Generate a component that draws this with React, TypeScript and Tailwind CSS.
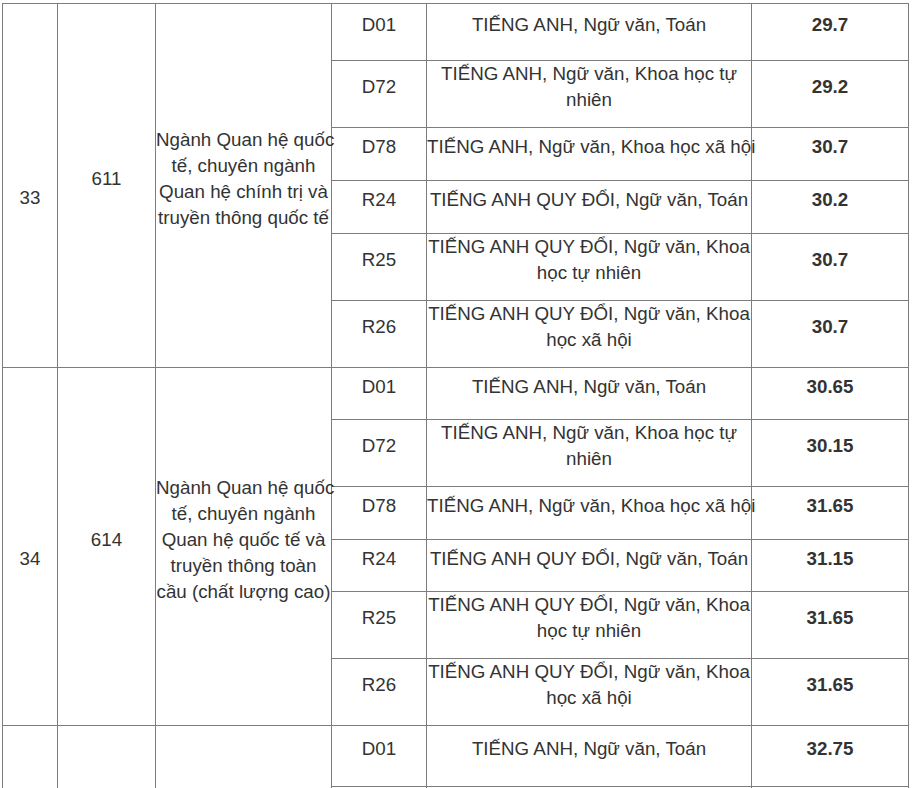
import React from 'react';

type Row = { code: string; lines: string[]; score: string; h: number };
type Group = { stt: string; ma: string; name: string[]; rows: Row[] };

const subjects = (scores: string[], hs: number[]): Row[] => [
  { code: 'D01', lines: ['TIẾNG ANH, Ngữ văn, Toán'], score: scores[0], h: hs[0] },
  { code: 'D72', lines: ['TIẾNG ANH, Ngữ văn, Khoa học tự', 'nhiên'], score: scores[1], h: hs[1] },
  { code: 'D78', lines: ['TIẾNG ANH, Ngữ văn, Khoa học xã hội'], score: scores[2], h: hs[2] },
  { code: 'R24', lines: ['TIẾNG ANH QUY ĐỔI, Ngữ văn, Toán'], score: scores[3], h: hs[3] },
  { code: 'R25', lines: ['TIẾNG ANH QUY ĐỔI, Ngữ văn, Khoa', 'học tự nhiên'], score: scores[4], h: hs[4] },
  { code: 'R26', lines: ['TIẾNG ANH QUY ĐỔI, Ngữ văn, Khoa', 'học xã hội'], score: scores[5], h: hs[5] },
];

const groups: Group[] = [
  {
    stt: '33',
    ma: '611',
    name: ['Ngành Quan hệ quốc', 'tế, chuyên ngành', 'Quan hệ chính trị và', 'truyền thông quốc tế'],
    rows: subjects(['29.7', '29.2', '30.7', '30.2', '30.7', '30.7'], [57, 65, 53, 53, 65, 62]),
  },
  {
    stt: '34',
    ma: '614',
    name: ['Ngành Quan hệ quốc', 'tế, chuyên ngành', 'Quan hệ quốc tế và', 'truyền thông toàn', 'cầu (chất lượng cao)'],
    rows: subjects(['30.65', '30.15', '31.65', '31.15', '31.65', '31.65'], [52, 65, 53, 52, 65, 62]),
  },
];

const cell = 'border border-[#7d7d7d] p-0 align-middle text-center';

const Lines: React.FC<{ lines: string[]; className?: string }> = ({ lines, className = 'pb-[14px]' }) => (
  <div className={`${className} whitespace-nowrap`}>
    {lines.map((l, i) => (
      <div key={i}>{l}</div>
    ))}
  </div>
);

const App: React.FC = () => {
  return (
    <div
      className="bg-white min-h-screen pl-[2px] pt-[3px] text-[#333333] text-[18.75px] leading-[26px]"
      style={{ fontFamily: '"Liberation Sans", Arial, sans-serif' }}
    >
      <table className="border-collapse table-fixed w-[907px]">
        <colgroup>
          <col className="w-[55px]" />
          <col className="w-[98px]" />
          <col className="w-[176px]" />
          <col className="w-[95px]" />
          <col className="w-[325px]" />
          <col className="w-[157px]" />
        </colgroup>
        <tbody>
          {groups.map(g =>
            g.rows.map((r, i) => (
              <tr key={g.stt + r.code} style={{ height: r.h }}>
                {i === 0 && (
                  <>
                    <td rowSpan={g.rows.length} className={cell}>
                      <Lines lines={[g.stt]} className="pt-[25px]" />
                    </td>
                    <td rowSpan={g.rows.length} className={cell}>
                      <Lines lines={[g.ma]} />
                    </td>
                    <td rowSpan={g.rows.length} className={cell}>
                      <Lines lines={g.name} />
                    </td>
                  </>
                )}
                <td className={cell}>
                  <Lines lines={[r.code]} />
                </td>
                <td className={cell}>
                  <Lines lines={r.lines} />
                </td>
                <td className={`${cell} font-bold`}>
                  <Lines lines={[r.score]} />
                </td>
              </tr>
            ))
          )}
          <tr className="h-[61px]">
            <td rowSpan={2} className={cell}></td>
            <td rowSpan={2} className={cell}></td>
            <td rowSpan={2} className={cell}></td>
            <td className={cell}>
              <Lines lines={['D01']} />
            </td>
            <td className={cell}>
              <Lines lines={['TIẾNG ANH, Ngữ văn, Toán']} />
            </td>
            <td className={`${cell} font-bold`}>
              <Lines lines={['32.75']} />
            </td>
          </tr>
          <tr className="h-[40px]">
            <td className={cell}></td>
            <td className={cell}></td>
            <td className={cell}></td>
          </tr>
        </tbody>
      </table>
    </div>
  );
};

export default App;
